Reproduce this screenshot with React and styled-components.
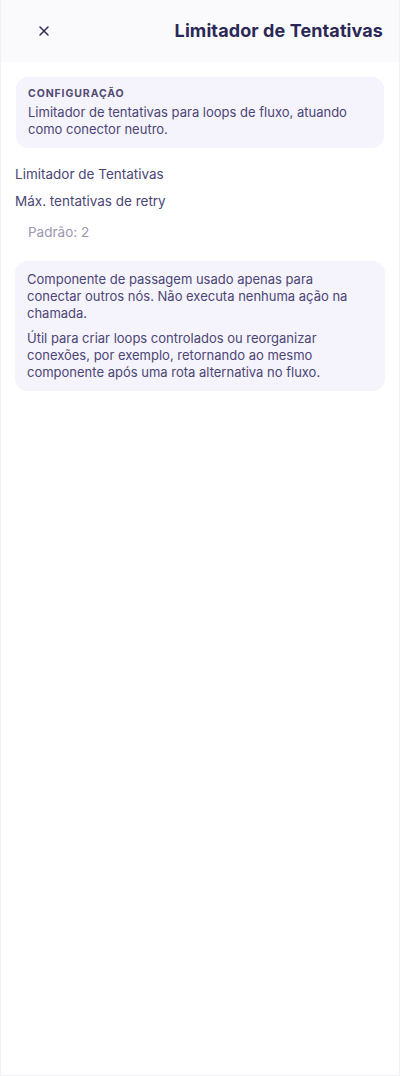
import React from "react";
import styled, { createGlobalStyle } from "styled-components";

const GlobalStyle = createGlobalStyle`
  html, body {
    margin: 0;
    padding: 0;
    background: #ffffff;
  }
  body {
    font-family: Inter, "Open Sans", sans-serif;
  }
`;

const Drawer = styled.div`
  width: 400px;
  height: 1076px;
  box-sizing: border-box;
  border: 1px solid #f0eff4;
  border-top: none;
  background: #ffffff;
  display: flex;
  flex-direction: column;
`;

const Header = styled.div`
  height: 62px;
  display: flex;
  align-items: center;
  justify-content: space-between;
  padding: 0 16px 0 29px;
  background: #fafafc;
  box-sizing: border-box;
`;

const CloseButton = styled.button`
  width: 28px;
  height: 28px;
  border: none;
  background: transparent;
  display: flex;
  align-items: center;
  justify-content: center;
  padding: 0;
  cursor: pointer;
  color: #2b2856;
`;

const Title = styled.h2`
  margin: 0 0 2px;
  font-size: 18px;
  font-weight: 700;
  color: #2b2856;
  letter-spacing: 0.1px;
`;

const Body = styled.div`
  display: flex;
  flex-direction: column;
  padding: 15px 14px;
`;

const InfoCard = styled.div`
  background: #f5f3fb;
  border-radius: 12px;
  padding: ${(p) => (p.$compact ? "10px 12px" : "10px 12px")};
  margin: ${(p) => p.$margin || "0"};
  display: flex;
  flex-direction: column;
  gap: ${(p) => (p.$compact ? "4px" : "8px")};
`;

const Kicker = styled.div`
  font-size: 10.5px;
  line-height: 13px;
  font-weight: 700;
  letter-spacing: 0.9px;
  color: #524c74;
  text-transform: uppercase;
`;

const Text = styled.p`
  margin: 0;
  font-size: 13px;
  line-height: 17px;
  color: #4b4676;
`;

const FieldLabel = styled.div`
  font-size: 13.5px;
  line-height: 18px;
  color: #4b4676;
  margin-top: ${(p) => p.$top || "0"};
`;

const Hint = styled.div`
  font-size: 13.5px;
  line-height: 18px;
  color: #9a96b0;
  padding-left: 13px;
  margin-top: 13px;
`;

const XIcon = () => (
  <svg width="16" height="16" viewBox="0 0 24 24" fill="none" stroke="currentColor" strokeWidth="2.2" strokeLinecap="round">
    <path d="M6 6l12 12M18 6L6 18" />
  </svg>
);

export default function App() {
  return (
    <>
      <GlobalStyle />
      <Drawer>
        <Header>
          <CloseButton aria-label="Fechar">
            <XIcon />
          </CloseButton>
          <Title>Limitador de Tentativas</Title>
        </Header>
        <Body>
          <InfoCard $compact $margin="0 1px">
            <Kicker>Configuração</Kicker>
            <Text>Limitador de tentativas para loops de fluxo, atuando como conector neutro.</Text>
          </InfoCard>
          <FieldLabel $top="17px">Limitador de Tentativas</FieldLabel>
          <FieldLabel $top="9px">Máx. tentativas de retry</FieldLabel>
          <Hint>Padrão: 2</Hint>
          <InfoCard $margin="20px 0 0">
            <Text>
              Componente de passagem usado apenas para
              <br />
              conectar outros nós. Não executa nenhuma ação na chamada.
            </Text>
            <Text>
              Útil para criar loops controlados ou reorganizar conexões, por exemplo, retornando ao mesmo componente após uma rota alternativa no fluxo.
            </Text>
          </InfoCard>
        </Body>
      </Drawer>
    </>
  );
}
